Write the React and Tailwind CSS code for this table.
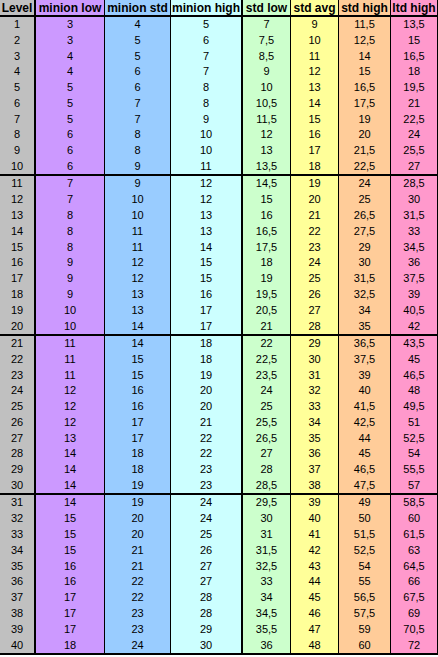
import React from "react";

const columns = [
  { key: "level", label: "Level", bg: "bg-[#c0c0c0]", border: "border-r-2" },
  { key: "minionLow", label: "minion low", bg: "bg-[#cc99ff]", border: "border-r" },
  { key: "minionStd", label: "minion std", bg: "bg-[#99ccff]", border: "border-r" },
  { key: "minionHigh", label: "minion high", bg: "bg-[#ccffff]", border: "border-r-2" },
  { key: "stdLow", label: "std low", bg: "bg-[#ccffcc]", border: "border-r" },
  { key: "stdAvg", label: "std avg", bg: "bg-[#ffff99]", border: "border-r" },
  { key: "stdHigh", label: "std high", bg: "bg-[#ffcc99]", border: "border-r" },
  { key: "ltdHigh", label: "ltd high", bg: "bg-[#ff99cc]", border: "border-r" },
];

// level, minion low, minion std, minion high, std low, std avg, std high, ltd high
const rows = [
  [1, 3, 4, 5, "7", 9, "11,5", "13,5"],
  [2, 3, 5, 6, "7,5", 10, "12,5", "15"],
  [3, 4, 5, 7, "8,5", 11, "14", "16,5"],
  [4, 4, 6, 7, "9", 12, "15", "18"],
  [5, 5, 6, 8, "10", 13, "16,5", "19,5"],
  [6, 5, 7, 8, "10,5", 14, "17,5", "21"],
  [7, 5, 7, 9, "11,5", 15, "19", "22,5"],
  [8, 6, 8, 10, "12", 16, "20", "24"],
  [9, 6, 8, 10, "13", 17, "21,5", "25,5"],
  [10, 6, 9, 11, "13,5", 18, "22,5", "27"],
  [11, 7, 9, 12, "14,5", 19, "24", "28,5"],
  [12, 7, 10, 12, "15", 20, "25", "30"],
  [13, 8, 10, 13, "16", 21, "26,5", "31,5"],
  [14, 8, 11, 13, "16,5", 22, "27,5", "33"],
  [15, 8, 11, 14, "17,5", 23, "29", "34,5"],
  [16, 9, 12, 15, "18", 24, "30", "36"],
  [17, 9, 12, 15, "19", 25, "31,5", "37,5"],
  [18, 9, 13, 16, "19,5", 26, "32,5", "39"],
  [19, 10, 13, 17, "20,5", 27, "34", "40,5"],
  [20, 10, 14, 17, "21", 28, "35", "42"],
  [21, 11, 14, 18, "22", 29, "36,5", "43,5"],
  [22, 11, 15, 18, "22,5", 30, "37,5", "45"],
  [23, 11, 15, 19, "23,5", 31, "39", "46,5"],
  [24, 12, 16, 20, "24", 32, "40", "48"],
  [25, 12, 16, 20, "25", 33, "41,5", "49,5"],
  [26, 12, 17, 21, "25,5", 34, "42,5", "51"],
  [27, 13, 17, 22, "26,5", 35, "44", "52,5"],
  [28, 14, 18, 22, "27", 36, "45", "54"],
  [29, 14, 18, 23, "28", 37, "46,5", "55,5"],
  [30, 14, 19, 23, "28,5", 38, "47,5", "57"],
  [31, 14, 19, 24, "29,5", 39, "49", "58,5"],
  [32, 15, 20, 24, "30", 40, "50", "60"],
  [33, 15, 20, 25, "31", 41, "51,5", "61,5"],
  [34, 15, 21, 26, "31,5", 42, "52,5", "63"],
  [35, 16, 21, 27, "32,5", 43, "54", "64,5"],
  [36, 16, 22, 27, "33", 44, "55", "66"],
  [37, 17, 22, 28, "34", 45, "56,5", "67,5"],
  [38, 17, 23, 28, "34,5", 46, "57,5", "69"],
  [39, 17, 23, 29, "35,5", 47, "59", "70,5"],
  [40, 18, 24, 30, "36", 48, "60", "72"],
];

const gridCols = "grid grid-cols-[36px_69px_66px_72px_48px_48px_52px_47px]";
const groupHeights = ["h-[159px]", "h-[160px]", "h-[159px]", "h-[160px]"];

function Row({ values }) {
  return (
    <div className={`${gridCols} flex-1 min-h-0`}>
      {values.map((v, i) => (
        <div
          key={columns[i].key}
          className={`${columns[i].bg} ${columns[i].border} border-black flex items-center justify-center leading-none`}
        >
          {v}
        </div>
      ))}
    </div>
  );
}

export default function App() {
  const groups = [0, 1, 2, 3].map((g) => rows.slice(g * 10, g * 10 + 10));

  return (
    <div className="w-[438px] h-[657px] bg-white text-black text-[11px] font-['Liberation_Sans',Arial,sans-serif]">
      <div className={`${gridCols} h-[17px] border-b-2 border-black`}>
        {columns.map((c) => (
          <div
            key={c.key}
            className={`${c.bg} ${c.border} border-black flex items-center justify-center text-[12px] font-bold leading-none whitespace-nowrap overflow-hidden`}
          >
            {c.label}
          </div>
        ))}
      </div>
      {groups.map((group, gi) => (
        <div key={gi} className={`${groupHeights[gi]} flex flex-col border-b-2 border-black`}>
          {group.map((r) => (
            <Row key={r[0]} values={r} />
          ))}
        </div>
      ))}
    </div>
  );
}
